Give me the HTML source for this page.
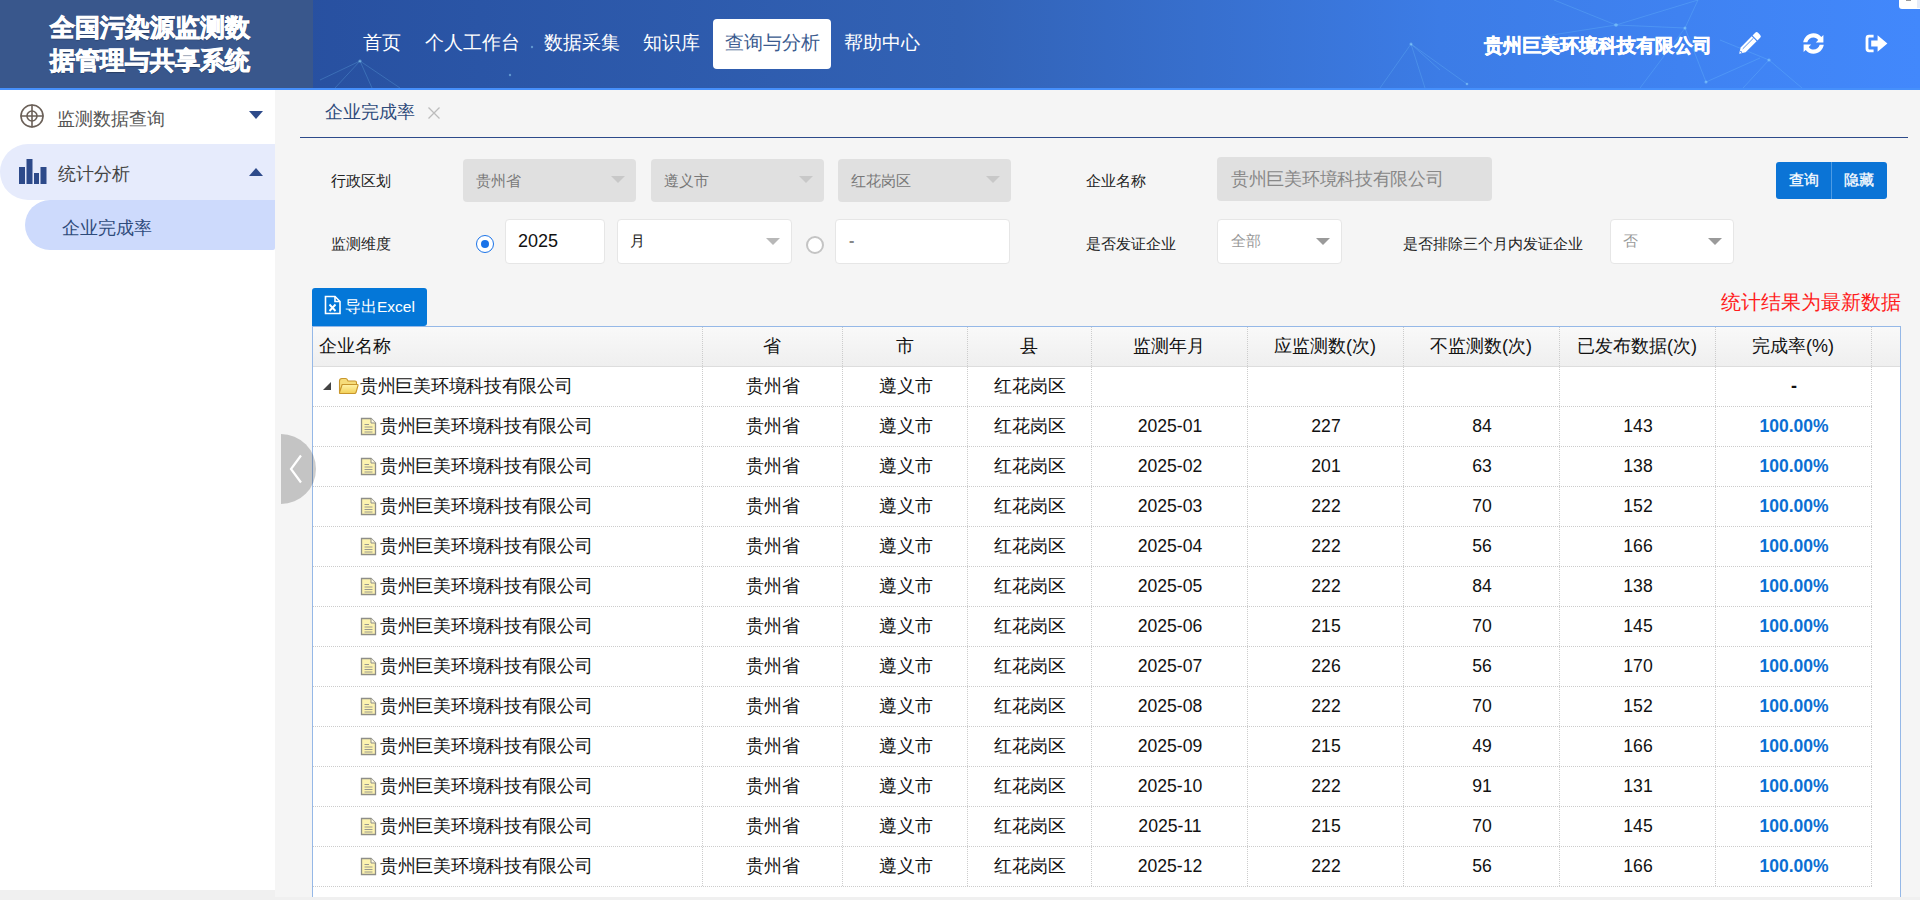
<!DOCTYPE html>
<html><head><meta charset="utf-8">
<style>
*{margin:0;padding:0;box-sizing:border-box}
html,body{width:1920px;height:900px;overflow:hidden;background:#f0f0f0;font-family:"Liberation Sans",sans-serif;position:relative}
.abs{position:absolute}
.txt{white-space:nowrap}
#hdr{left:0;top:0;width:1920px;height:88px;background:linear-gradient(90deg,#244896 0%,#2a55a6 25%,#3262b5 50%,#3c7ce6 75%,#4288fc 100%);overflow:hidden}
#hline{left:0;top:88px;width:1920px;height:2px;background:#4690fc}
#logo{left:0;top:0;width:313px;height:88px;background:#39578c}
.lt{color:#fff;font-weight:bold;-webkit-text-stroke:0.8px #fff;font-size:25px;line-height:33px;white-space:nowrap;text-shadow:0 1px 1px rgba(0,0,0,.35)}
.nav{top:19px;height:50px;line-height:48px;font-size:19px;color:#fff;padding:0 12px;white-space:nowrap}
.nav.on{background:#fff;color:#3a5a8e;border-radius:4px}
#side{left:0;top:90px;width:275px;height:800px;background:#fff}
#main{left:275px;top:90px;width:1645px;height:807px;background:#f5f5f5}
.lbl{font-size:15px;line-height:20px;color:#222;white-space:nowrap}
.sel{background:#e0e0e0;border-radius:4px}
.inp{background:#fff;border:1px solid #e6e6e6;border-radius:4px}
.arr{position:absolute;width:0;height:0;border-left:7px solid transparent;border-right:7px solid transparent;border-top:7px solid #c8c8c8}
.st{position:absolute;font-size:15px;line-height:20px;color:#777;white-space:nowrap}
#tbl{left:312px;top:326px;width:1589px;height:571px;background:#fff;border:1px solid #95b8e7;border-bottom:none}
.hd{position:absolute;top:0;height:40px;background:linear-gradient(#f9f9f9,#efefef);border-bottom:1px solid #ddd}
.vl{position:absolute;width:0;border-left:1px dotted #ccc}
.hl{position:absolute;height:0;border-top:1px dotted #ccc}
.c{position:absolute;text-align:center;font-size:18px;line-height:24px;color:#111;white-space:nowrap}
.num{font-size:17.6px}
.pct{color:#0b6fd3;font-weight:bold;font-size:17.5px}
</style></head><body>
<div id="hdr" class="abs"></div>
<svg class="abs" style="left:0;top:0" width="1920" height="88" viewBox="0 0 1920 88"><g stroke="#7fd8ff" stroke-opacity="0.22" stroke-width="1" fill="none"><path d="M360 61 L335 88 M360 61 L400 88 M360 61 L372 88 M360 61 L320 80"/><path d="M1616 25 L1698 0 M1616 25 L1554 0 M1616 25 L1685 28 L1698 0 M1685 28 L1706 82 M1685 28 L1640 88 M1616 25 L1520 40"/><path d="M1411 44 L1380 88 M1411 44 L1467 84 M1411 44 L1425 88 M1411 44 L1440 70"/><path d="M1769 60 L1743 88 M1769 60 L1802 88 M1769 60 L1720 40"/><path d="M1706 82 L1760 58"/></g><g fill="#9fe6ff" fill-opacity="0.45"><circle cx="360" cy="61" r="1.6"/><circle cx="532" cy="47" r="1.2"/><circle cx="510" cy="75" r="1.2"/><circle cx="1616" cy="25" r="1.8"/><circle cx="1685" cy="28" r="1.5"/><circle cx="1411" cy="44" r="1.5"/><circle cx="1769" cy="60" r="1.6"/><circle cx="1706" cy="82" r="1.5"/><circle cx="1467" cy="84" r="1.3"/></g></svg>
<div id="logo" class="abs"></div>
<div class="abs lt" style="left:50px;top:11px">全国污染源监测数</div>
<div class="abs lt" style="left:50px;top:44px">据管理与共享系统</div>
<div class="abs nav" style="left:351px">首页</div>
<div class="abs nav" style="left:413px">个人工作台</div>
<div class="abs nav" style="left:532px">数据采集</div>
<div class="abs nav" style="left:631px">知识库</div>
<div class="abs nav on" style="left:713px;width:118px">查询与分析</div>
<div class="abs nav" style="left:832px">帮助中心</div>
<div class="abs txt" style="left:1484px;top:34px;font-size:19px;line-height:24px;color:#fff;font-weight:bold;-webkit-text-stroke:0.5px #fff">贵州巨美环境科技有限公司</div>
<svg class="abs" style="left:1736px;top:30px" width="27" height="27" viewBox="-13.5 -13.5 27 27"><g transform="rotate(-45)" fill="#fff"><path d="M-14.6 0 L-9 -3.5 H6.6 V3.5 H-9 Z"/><path d="M7.8 -3.5 H11.6 Q13.6 -3.5 13.6 -1.5 V1.5 Q13.6 3.5 11.6 3.5 H7.8 Z"/></g><g transform="rotate(-45)" stroke="#3d7fe6" fill="none"><path d="M-8.6 -1 H6.6" stroke-width="0.8"/><path d="M-11.8 -1.2 L-11.8 1.2" stroke-width="1"/></g></svg>
<svg class="abs" style="left:1802px;top:32px" width="23" height="23" viewBox="0 0 23 23"><g fill="#fff"><path d="M11.5 1.2 C15 1.2 17.6 2.8 19.3 5 L21.4 2.9 V10.5 H13.8 L16.2 8.1 C15.1 6.4 13.4 5.4 11.5 5.4 C8.6 5.4 6.1 7.4 5.3 10.2 H1.2 C2 5.1 6.3 1.2 11.5 1.2 Z"/><path d="M11.5 21.8 C8 21.8 5.4 20.2 3.7 18 L1.6 20.1 V12.5 H9.2 L6.8 14.9 C7.9 16.6 9.6 17.6 11.5 17.6 C14.4 17.6 16.9 15.6 17.7 12.8 H21.8 C21 17.9 16.7 21.8 11.5 21.8 Z"/></g></svg>
<svg class="abs" style="left:1865px;top:34px" width="23" height="19" viewBox="0 0 23 19"><g fill="#fff"><path d="M4 0.8 H8.6 V3.6 H4.4 Q3.4 3.6 3.4 4.6 V14.4 Q3.4 15.4 4.4 15.4 H8.6 V18.2 H4 Q0.6 18.2 0.6 14.8 V4.2 Q0.6 0.8 4 0.8 Z"/><path d="M6.2 6.6 H12.6 V1.2 L22.4 9.5 L12.6 17.8 V12.4 H6.2 Z"/></g></svg>
<div class="abs" style="left:1899px;top:-4px;width:24px;height:13px;background:#fff;border-radius:3px"></div>
<div class="abs" style="left:1917px;top:0;width:3px;height:8px;background:#e6ecf8"></div>
<div class="abs" style="left:1906px;top:0;width:5px;height:1px;background:#999"></div>
<div id="hline" class="abs"></div>
<div id="side" class="abs"></div>
<div id="main" class="abs"></div>
<div class="abs txt" style="left:57px;top:107px;font-size:18px;line-height:24px;color:#555">监测数据查询</div>
<div class="abs" style="left:0;top:144px;width:275px;height:56px;background:#e6ebfc;border-radius:28px 0 0 28px"></div>
<div class="abs txt" style="left:58px;top:162px;font-size:18px;line-height:24px;color:#444">统计分析</div>
<div class="abs" style="left:25px;top:200px;width:250px;height:50px;background:#cddafc;border-radius:25px 0 2px 25px"></div>
<div class="abs txt" style="left:62px;top:216px;font-size:18px;line-height:24px;color:#2d4a7a">企业完成率</div>
<div class="abs" style="left:249px;top:111px;width:0;height:0;border-left:7px solid transparent;border-right:7px solid transparent;border-top:8px solid #2d4a8a"></div>
<div class="abs" style="left:249px;top:168px;width:0;height:0;border-left:7px solid transparent;border-right:7px solid transparent;border-bottom:8px solid #2d4a8a"></div>
<svg class="abs" style="left:19px;top:103px" width="26" height="26" viewBox="0 0 26 26"><g fill="none" stroke="#6b6058" stroke-width="1.6"><circle cx="13" cy="13" r="11"/><circle cx="13" cy="13" r="5"/><path d="M13 1.5 V24.5 M1.5 13 H24.5"/></g></svg>
<svg class="abs" style="left:19px;top:159px" width="28" height="26" viewBox="0 0 28 26"><g fill="#2d4a8a"><rect x="0" y="8" width="6" height="17"/><rect x="7.5" y="0" width="6" height="25"/><rect x="15" y="14" width="5" height="11"/><rect x="21.5" y="8" width="6" height="17"/></g></svg>
<div class="abs txt" style="left:325px;top:100px;font-size:18px;line-height:24px;color:#2d4a7a">企业完成率</div>
<svg class="abs" style="left:427px;top:106px" width="14" height="14" viewBox="0 0 14 14"><path d="M1.5 1.5 L12.5 12.5 M12.5 1.5 L1.5 12.5" stroke="#bcbcbc" stroke-width="1.3"/></svg>
<div class="abs" style="left:300px;top:137px;width:1608px;height:1px;background:#2d4a8a"></div>
<div class="abs lbl" style="left:331px;top:171px">行政区划</div>
<div class="abs sel" style="left:463px;top:159px;width:173px;height:43px"></div>
<div class="st" style="left:476px;top:171px">贵州省</div>
<div class="arr" style="left:611px;top:176px;border-top-color:#c8c8c8"></div>
<div class="abs sel" style="left:651px;top:159px;width:173px;height:43px"></div>
<div class="st" style="left:664px;top:171px">遵义市</div>
<div class="arr" style="left:799px;top:176px;border-top-color:#c8c8c8"></div>
<div class="abs sel" style="left:838px;top:159px;width:173px;height:43px"></div>
<div class="st" style="left:851px;top:171px">红花岗区</div>
<div class="arr" style="left:986px;top:176px;border-top-color:#c8c8c8"></div>
<div class="abs lbl" style="left:1086px;top:171px">企业名称</div>
<div class="abs sel" style="left:1217px;top:157px;width:275px;height:44px"></div>
<div class="st" style="left:1231px;top:167px;font-size:18px;line-height:24px;color:#888;letter-spacing:-0.3px">贵州巨美环境科技有限公司</div>
<div class="abs" style="left:1776px;top:162px;width:111px;height:37px;background:#0b74d6;border-radius:3px"></div>
<div class="abs" style="left:1831px;top:162px;width:1px;height:37px;background:#4d9be4"></div>
<div class="abs txt" style="left:1789px;top:170px;font-size:15px;line-height:20px;color:#fff;-webkit-text-stroke:0.3px #fff">查询</div>
<div class="abs txt" style="left:1844px;top:170px;font-size:15px;line-height:20px;color:#fff;-webkit-text-stroke:0.3px #fff">隐藏</div>
<div class="abs lbl" style="left:331px;top:234px">监测维度</div>
<div class="abs" style="left:476px;top:235px;width:18px;height:18px;border:1.5px solid #1a73e8;border-radius:50%;background:#fff"></div>
<div class="abs" style="left:481px;top:240px;width:8px;height:8px;border-radius:50%;background:#1a73e8"></div>
<div class="abs inp" style="left:505px;top:219px;width:100px;height:45px"></div>
<div class="abs txt" style="left:518px;top:229px;font-size:18px;line-height:24px;color:#111">2025</div>
<div class="abs inp" style="left:617px;top:219px;width:175px;height:45px"></div>
<div class="abs txt" style="left:630px;top:229px;font-size:15px;line-height:24px;color:#222">月</div>
<div class="arr" style="left:766px;top:238px;border-top-color:#b8b8b8"></div>
<div class="abs" style="left:806px;top:236px;width:18px;height:18px;border:2px solid #c4c4c4;border-radius:50%;background:#fff"></div>
<div class="abs inp" style="left:835px;top:219px;width:175px;height:45px"></div>
<div class="abs txt" style="left:849px;top:229px;font-size:16px;line-height:24px;color:#888;font-weight:bold">-</div>
<div class="abs lbl" style="left:1086px;top:234px">是否发证企业</div>
<div class="abs inp" style="left:1217px;top:219px;width:125px;height:45px"></div>
<div class="st" style="left:1231px;top:231px;color:#999">全部</div>
<div class="arr" style="left:1316px;top:238px;border-top-color:#9a9a9a"></div>
<div class="abs lbl" style="left:1403px;top:234px">是否排除三个月内发证企业</div>
<div class="abs inp" style="left:1610px;top:219px;width:124px;height:45px"></div>
<div class="st" style="left:1623px;top:231px;color:#999">否</div>
<div class="arr" style="left:1708px;top:238px;border-top-color:#9a9a9a"></div>
<div class="abs" style="left:312px;top:288px;width:115px;height:38px;background:#0477d8;border-radius:3px 3px 3px 0"></div>
<svg class="abs" style="left:324px;top:295px" width="18" height="20" viewBox="0 0 18 20"><g fill="none" stroke="#fff" stroke-width="1.6"><path d="M1.5 1.5 H11 L16 6.5 V18.5 H1.5 Z"/><path d="M11 1.5 V6.5 H16"/><path d="M5.5 9.5 L11.5 16 M11.5 9.5 L5.5 16" stroke-width="1.9"/></g></svg>
<div class="abs txt" style="left:345px;top:296px;font-size:15.5px;line-height:21px;color:#fff">导出Excel</div>
<div class="abs txt" style="left:1721px;top:289px;font-size:20px;line-height:26px;color:#ff1c1c">统计结果为最新数据</div>
<div id="tbl" class="abs">
<div class="hd" style="left:0;width:1587px"></div>
<div class="vl" style="left:389px;top:0;height:559px"></div>
<div class="vl" style="left:529px;top:0;height:559px"></div>
<div class="vl" style="left:654px;top:0;height:559px"></div>
<div class="vl" style="left:778px;top:0;height:559px"></div>
<div class="vl" style="left:934px;top:0;height:559px"></div>
<div class="vl" style="left:1090px;top:0;height:559px"></div>
<div class="vl" style="left:1246px;top:0;height:559px"></div>
<div class="vl" style="left:1402px;top:0;height:559px"></div>
<div class="vl" style="left:1558px;top:0;height:559px"></div>
<div class="c" style="left:6px;top:7px;text-align:left">企业名称</div>
<div class="c" style="left:389px;width:140px;top:7px">省</div>
<div class="c" style="left:529px;width:125px;top:7px">市</div>
<div class="c" style="left:654px;width:124px;top:7px">县</div>
<div class="c" style="left:778px;width:156px;top:7px">监测年月</div>
<div class="c" style="left:934px;width:156px;top:7px">应监测数(次)</div>
<div class="c" style="left:1090px;width:156px;top:7px">不监测数(次)</div>
<div class="c" style="left:1246px;width:156px;top:7px">已发布数据(次)</div>
<div class="c" style="left:1402px;width:156px;top:7px">完成率(%)</div>
<div class="hl" style="left:0;top:79px;width:1559px"></div>
<div class="hl" style="left:0;top:119px;width:1559px"></div>
<div class="hl" style="left:0;top:159px;width:1559px"></div>
<div class="hl" style="left:0;top:199px;width:1559px"></div>
<div class="hl" style="left:0;top:239px;width:1559px"></div>
<div class="hl" style="left:0;top:279px;width:1559px"></div>
<div class="hl" style="left:0;top:319px;width:1559px"></div>
<div class="hl" style="left:0;top:359px;width:1559px"></div>
<div class="hl" style="left:0;top:399px;width:1559px"></div>
<div class="hl" style="left:0;top:439px;width:1559px"></div>
<div class="hl" style="left:0;top:479px;width:1559px"></div>
<div class="hl" style="left:0;top:519px;width:1559px"></div>
<div class="hl" style="left:0;top:559px;width:1559px"></div>
<div class="abs" style="left:10px;top:55px;width:0;height:0;border-left:8px solid transparent;border-bottom:8px solid #444"></div>
<svg class="abs" style="left:25px;top:50px" width="21" height="18" viewBox="0 0 21 18"><defs><linearGradient id="fg" x1="0" y1="0" x2="0" y2="1"><stop offset="0" stop-color="#fff3a8"/><stop offset="1" stop-color="#f2cf55"/></linearGradient></defs><path d="M1.5 4 Q1.5 1.5 4 1.5 H7.5 Q9 1.5 9.5 3 L10 4 H17 Q18.5 4 18.5 5.5 V8 H4.5 L1.5 15 Z" fill="#f6dc7a" stroke="#c8962c" stroke-width="1.1"/><path d="M4.2 7.5 H19.5 Q20.3 7.5 20 8.5 L18 15.5 Q17.7 16.5 16.5 16.5 H2.5 Q1.2 16.5 1.5 15.5 Z" fill="url(#fg)" stroke="#c8962c" stroke-width="1.1"/></svg>
<div class="c" style="left:47px;top:47px;text-align:left;letter-spacing:-0.3px">贵州巨美环境科技有限公司</div>
<div class="c" style="left:390px;width:140px;top:47px">贵州省</div>
<div class="c" style="left:530px;width:125px;top:47px">遵义市</div>
<div class="c" style="left:655px;width:124px;top:47px">红花岗区</div>
<div class="c" style="left:1403px;width:156px;top:47px"><b>-</b></div>
<svg class="abs" style="left:47px;top:90px" width="17" height="19" viewBox="0 0 17 19"><path d="M1.5 1.5 H11 L15.5 6 V17.5 H1.5 Z" fill="#fcf3b0" stroke="#8e8e88" stroke-width="1.3"/><path d="M11 1.5 V6 H15.5" fill="#fffbe0" stroke="#8e8e88" stroke-width="1"/><path d="M4.5 7.5 H9 M4.5 10 H12.5 M4.5 12.5 H12.5 M4.5 15 H12.5" stroke="#9a9a90" stroke-width="1"/></svg>
<div class="c" style="left:67px;top:87px;text-align:left;letter-spacing:-0.3px">贵州巨美环境科技有限公司</div>
<div class="c" style="left:390px;width:140px;top:87px">贵州省</div>
<div class="c" style="left:530px;width:125px;top:87px">遵义市</div>
<div class="c" style="left:655px;width:124px;top:87px">红花岗区</div>
<div class="c num" style="left:779px;width:156px;top:87px">2025-01</div>
<div class="c num" style="left:935px;width:156px;top:87px">227</div>
<div class="c num" style="left:1091px;width:156px;top:87px">84</div>
<div class="c num" style="left:1247px;width:156px;top:87px">143</div>
<div class="c pct" style="left:1403px;width:156px;top:87px">100.00%</div>
<svg class="abs" style="left:47px;top:130px" width="17" height="19" viewBox="0 0 17 19"><path d="M1.5 1.5 H11 L15.5 6 V17.5 H1.5 Z" fill="#fcf3b0" stroke="#8e8e88" stroke-width="1.3"/><path d="M11 1.5 V6 H15.5" fill="#fffbe0" stroke="#8e8e88" stroke-width="1"/><path d="M4.5 7.5 H9 M4.5 10 H12.5 M4.5 12.5 H12.5 M4.5 15 H12.5" stroke="#9a9a90" stroke-width="1"/></svg>
<div class="c" style="left:67px;top:127px;text-align:left;letter-spacing:-0.3px">贵州巨美环境科技有限公司</div>
<div class="c" style="left:390px;width:140px;top:127px">贵州省</div>
<div class="c" style="left:530px;width:125px;top:127px">遵义市</div>
<div class="c" style="left:655px;width:124px;top:127px">红花岗区</div>
<div class="c num" style="left:779px;width:156px;top:127px">2025-02</div>
<div class="c num" style="left:935px;width:156px;top:127px">201</div>
<div class="c num" style="left:1091px;width:156px;top:127px">63</div>
<div class="c num" style="left:1247px;width:156px;top:127px">138</div>
<div class="c pct" style="left:1403px;width:156px;top:127px">100.00%</div>
<svg class="abs" style="left:47px;top:170px" width="17" height="19" viewBox="0 0 17 19"><path d="M1.5 1.5 H11 L15.5 6 V17.5 H1.5 Z" fill="#fcf3b0" stroke="#8e8e88" stroke-width="1.3"/><path d="M11 1.5 V6 H15.5" fill="#fffbe0" stroke="#8e8e88" stroke-width="1"/><path d="M4.5 7.5 H9 M4.5 10 H12.5 M4.5 12.5 H12.5 M4.5 15 H12.5" stroke="#9a9a90" stroke-width="1"/></svg>
<div class="c" style="left:67px;top:167px;text-align:left;letter-spacing:-0.3px">贵州巨美环境科技有限公司</div>
<div class="c" style="left:390px;width:140px;top:167px">贵州省</div>
<div class="c" style="left:530px;width:125px;top:167px">遵义市</div>
<div class="c" style="left:655px;width:124px;top:167px">红花岗区</div>
<div class="c num" style="left:779px;width:156px;top:167px">2025-03</div>
<div class="c num" style="left:935px;width:156px;top:167px">222</div>
<div class="c num" style="left:1091px;width:156px;top:167px">70</div>
<div class="c num" style="left:1247px;width:156px;top:167px">152</div>
<div class="c pct" style="left:1403px;width:156px;top:167px">100.00%</div>
<svg class="abs" style="left:47px;top:210px" width="17" height="19" viewBox="0 0 17 19"><path d="M1.5 1.5 H11 L15.5 6 V17.5 H1.5 Z" fill="#fcf3b0" stroke="#8e8e88" stroke-width="1.3"/><path d="M11 1.5 V6 H15.5" fill="#fffbe0" stroke="#8e8e88" stroke-width="1"/><path d="M4.5 7.5 H9 M4.5 10 H12.5 M4.5 12.5 H12.5 M4.5 15 H12.5" stroke="#9a9a90" stroke-width="1"/></svg>
<div class="c" style="left:67px;top:207px;text-align:left;letter-spacing:-0.3px">贵州巨美环境科技有限公司</div>
<div class="c" style="left:390px;width:140px;top:207px">贵州省</div>
<div class="c" style="left:530px;width:125px;top:207px">遵义市</div>
<div class="c" style="left:655px;width:124px;top:207px">红花岗区</div>
<div class="c num" style="left:779px;width:156px;top:207px">2025-04</div>
<div class="c num" style="left:935px;width:156px;top:207px">222</div>
<div class="c num" style="left:1091px;width:156px;top:207px">56</div>
<div class="c num" style="left:1247px;width:156px;top:207px">166</div>
<div class="c pct" style="left:1403px;width:156px;top:207px">100.00%</div>
<svg class="abs" style="left:47px;top:250px" width="17" height="19" viewBox="0 0 17 19"><path d="M1.5 1.5 H11 L15.5 6 V17.5 H1.5 Z" fill="#fcf3b0" stroke="#8e8e88" stroke-width="1.3"/><path d="M11 1.5 V6 H15.5" fill="#fffbe0" stroke="#8e8e88" stroke-width="1"/><path d="M4.5 7.5 H9 M4.5 10 H12.5 M4.5 12.5 H12.5 M4.5 15 H12.5" stroke="#9a9a90" stroke-width="1"/></svg>
<div class="c" style="left:67px;top:247px;text-align:left;letter-spacing:-0.3px">贵州巨美环境科技有限公司</div>
<div class="c" style="left:390px;width:140px;top:247px">贵州省</div>
<div class="c" style="left:530px;width:125px;top:247px">遵义市</div>
<div class="c" style="left:655px;width:124px;top:247px">红花岗区</div>
<div class="c num" style="left:779px;width:156px;top:247px">2025-05</div>
<div class="c num" style="left:935px;width:156px;top:247px">222</div>
<div class="c num" style="left:1091px;width:156px;top:247px">84</div>
<div class="c num" style="left:1247px;width:156px;top:247px">138</div>
<div class="c pct" style="left:1403px;width:156px;top:247px">100.00%</div>
<svg class="abs" style="left:47px;top:290px" width="17" height="19" viewBox="0 0 17 19"><path d="M1.5 1.5 H11 L15.5 6 V17.5 H1.5 Z" fill="#fcf3b0" stroke="#8e8e88" stroke-width="1.3"/><path d="M11 1.5 V6 H15.5" fill="#fffbe0" stroke="#8e8e88" stroke-width="1"/><path d="M4.5 7.5 H9 M4.5 10 H12.5 M4.5 12.5 H12.5 M4.5 15 H12.5" stroke="#9a9a90" stroke-width="1"/></svg>
<div class="c" style="left:67px;top:287px;text-align:left;letter-spacing:-0.3px">贵州巨美环境科技有限公司</div>
<div class="c" style="left:390px;width:140px;top:287px">贵州省</div>
<div class="c" style="left:530px;width:125px;top:287px">遵义市</div>
<div class="c" style="left:655px;width:124px;top:287px">红花岗区</div>
<div class="c num" style="left:779px;width:156px;top:287px">2025-06</div>
<div class="c num" style="left:935px;width:156px;top:287px">215</div>
<div class="c num" style="left:1091px;width:156px;top:287px">70</div>
<div class="c num" style="left:1247px;width:156px;top:287px">145</div>
<div class="c pct" style="left:1403px;width:156px;top:287px">100.00%</div>
<svg class="abs" style="left:47px;top:330px" width="17" height="19" viewBox="0 0 17 19"><path d="M1.5 1.5 H11 L15.5 6 V17.5 H1.5 Z" fill="#fcf3b0" stroke="#8e8e88" stroke-width="1.3"/><path d="M11 1.5 V6 H15.5" fill="#fffbe0" stroke="#8e8e88" stroke-width="1"/><path d="M4.5 7.5 H9 M4.5 10 H12.5 M4.5 12.5 H12.5 M4.5 15 H12.5" stroke="#9a9a90" stroke-width="1"/></svg>
<div class="c" style="left:67px;top:327px;text-align:left;letter-spacing:-0.3px">贵州巨美环境科技有限公司</div>
<div class="c" style="left:390px;width:140px;top:327px">贵州省</div>
<div class="c" style="left:530px;width:125px;top:327px">遵义市</div>
<div class="c" style="left:655px;width:124px;top:327px">红花岗区</div>
<div class="c num" style="left:779px;width:156px;top:327px">2025-07</div>
<div class="c num" style="left:935px;width:156px;top:327px">226</div>
<div class="c num" style="left:1091px;width:156px;top:327px">56</div>
<div class="c num" style="left:1247px;width:156px;top:327px">170</div>
<div class="c pct" style="left:1403px;width:156px;top:327px">100.00%</div>
<svg class="abs" style="left:47px;top:370px" width="17" height="19" viewBox="0 0 17 19"><path d="M1.5 1.5 H11 L15.5 6 V17.5 H1.5 Z" fill="#fcf3b0" stroke="#8e8e88" stroke-width="1.3"/><path d="M11 1.5 V6 H15.5" fill="#fffbe0" stroke="#8e8e88" stroke-width="1"/><path d="M4.5 7.5 H9 M4.5 10 H12.5 M4.5 12.5 H12.5 M4.5 15 H12.5" stroke="#9a9a90" stroke-width="1"/></svg>
<div class="c" style="left:67px;top:367px;text-align:left;letter-spacing:-0.3px">贵州巨美环境科技有限公司</div>
<div class="c" style="left:390px;width:140px;top:367px">贵州省</div>
<div class="c" style="left:530px;width:125px;top:367px">遵义市</div>
<div class="c" style="left:655px;width:124px;top:367px">红花岗区</div>
<div class="c num" style="left:779px;width:156px;top:367px">2025-08</div>
<div class="c num" style="left:935px;width:156px;top:367px">222</div>
<div class="c num" style="left:1091px;width:156px;top:367px">70</div>
<div class="c num" style="left:1247px;width:156px;top:367px">152</div>
<div class="c pct" style="left:1403px;width:156px;top:367px">100.00%</div>
<svg class="abs" style="left:47px;top:410px" width="17" height="19" viewBox="0 0 17 19"><path d="M1.5 1.5 H11 L15.5 6 V17.5 H1.5 Z" fill="#fcf3b0" stroke="#8e8e88" stroke-width="1.3"/><path d="M11 1.5 V6 H15.5" fill="#fffbe0" stroke="#8e8e88" stroke-width="1"/><path d="M4.5 7.5 H9 M4.5 10 H12.5 M4.5 12.5 H12.5 M4.5 15 H12.5" stroke="#9a9a90" stroke-width="1"/></svg>
<div class="c" style="left:67px;top:407px;text-align:left;letter-spacing:-0.3px">贵州巨美环境科技有限公司</div>
<div class="c" style="left:390px;width:140px;top:407px">贵州省</div>
<div class="c" style="left:530px;width:125px;top:407px">遵义市</div>
<div class="c" style="left:655px;width:124px;top:407px">红花岗区</div>
<div class="c num" style="left:779px;width:156px;top:407px">2025-09</div>
<div class="c num" style="left:935px;width:156px;top:407px">215</div>
<div class="c num" style="left:1091px;width:156px;top:407px">49</div>
<div class="c num" style="left:1247px;width:156px;top:407px">166</div>
<div class="c pct" style="left:1403px;width:156px;top:407px">100.00%</div>
<svg class="abs" style="left:47px;top:450px" width="17" height="19" viewBox="0 0 17 19"><path d="M1.5 1.5 H11 L15.5 6 V17.5 H1.5 Z" fill="#fcf3b0" stroke="#8e8e88" stroke-width="1.3"/><path d="M11 1.5 V6 H15.5" fill="#fffbe0" stroke="#8e8e88" stroke-width="1"/><path d="M4.5 7.5 H9 M4.5 10 H12.5 M4.5 12.5 H12.5 M4.5 15 H12.5" stroke="#9a9a90" stroke-width="1"/></svg>
<div class="c" style="left:67px;top:447px;text-align:left;letter-spacing:-0.3px">贵州巨美环境科技有限公司</div>
<div class="c" style="left:390px;width:140px;top:447px">贵州省</div>
<div class="c" style="left:530px;width:125px;top:447px">遵义市</div>
<div class="c" style="left:655px;width:124px;top:447px">红花岗区</div>
<div class="c num" style="left:779px;width:156px;top:447px">2025-10</div>
<div class="c num" style="left:935px;width:156px;top:447px">222</div>
<div class="c num" style="left:1091px;width:156px;top:447px">91</div>
<div class="c num" style="left:1247px;width:156px;top:447px">131</div>
<div class="c pct" style="left:1403px;width:156px;top:447px">100.00%</div>
<svg class="abs" style="left:47px;top:490px" width="17" height="19" viewBox="0 0 17 19"><path d="M1.5 1.5 H11 L15.5 6 V17.5 H1.5 Z" fill="#fcf3b0" stroke="#8e8e88" stroke-width="1.3"/><path d="M11 1.5 V6 H15.5" fill="#fffbe0" stroke="#8e8e88" stroke-width="1"/><path d="M4.5 7.5 H9 M4.5 10 H12.5 M4.5 12.5 H12.5 M4.5 15 H12.5" stroke="#9a9a90" stroke-width="1"/></svg>
<div class="c" style="left:67px;top:487px;text-align:left;letter-spacing:-0.3px">贵州巨美环境科技有限公司</div>
<div class="c" style="left:390px;width:140px;top:487px">贵州省</div>
<div class="c" style="left:530px;width:125px;top:487px">遵义市</div>
<div class="c" style="left:655px;width:124px;top:487px">红花岗区</div>
<div class="c num" style="left:779px;width:156px;top:487px">2025-11</div>
<div class="c num" style="left:935px;width:156px;top:487px">215</div>
<div class="c num" style="left:1091px;width:156px;top:487px">70</div>
<div class="c num" style="left:1247px;width:156px;top:487px">145</div>
<div class="c pct" style="left:1403px;width:156px;top:487px">100.00%</div>
<svg class="abs" style="left:47px;top:530px" width="17" height="19" viewBox="0 0 17 19"><path d="M1.5 1.5 H11 L15.5 6 V17.5 H1.5 Z" fill="#fcf3b0" stroke="#8e8e88" stroke-width="1.3"/><path d="M11 1.5 V6 H15.5" fill="#fffbe0" stroke="#8e8e88" stroke-width="1"/><path d="M4.5 7.5 H9 M4.5 10 H12.5 M4.5 12.5 H12.5 M4.5 15 H12.5" stroke="#9a9a90" stroke-width="1"/></svg>
<div class="c" style="left:67px;top:527px;text-align:left;letter-spacing:-0.3px">贵州巨美环境科技有限公司</div>
<div class="c" style="left:390px;width:140px;top:527px">贵州省</div>
<div class="c" style="left:530px;width:125px;top:527px">遵义市</div>
<div class="c" style="left:655px;width:124px;top:527px">红花岗区</div>
<div class="c num" style="left:779px;width:156px;top:527px">2025-12</div>
<div class="c num" style="left:935px;width:156px;top:527px">222</div>
<div class="c num" style="left:1091px;width:156px;top:527px">56</div>
<div class="c num" style="left:1247px;width:156px;top:527px">166</div>
<div class="c pct" style="left:1403px;width:156px;top:527px">100.00%</div>
</div>
<div class="abs" style="left:246px;top:434px;width:70px;height:70px;border-radius:50%;background:rgba(0,0,0,0.2);clip-path:inset(0 0 0 35px)"></div>
<svg class="abs" style="left:286px;top:452px" width="20" height="34" viewBox="0 0 20 34"><path d="M15 3.5 L5 17 L15 30.5" fill="none" stroke="#fff" stroke-width="2.2"/></svg>
</body></html>
